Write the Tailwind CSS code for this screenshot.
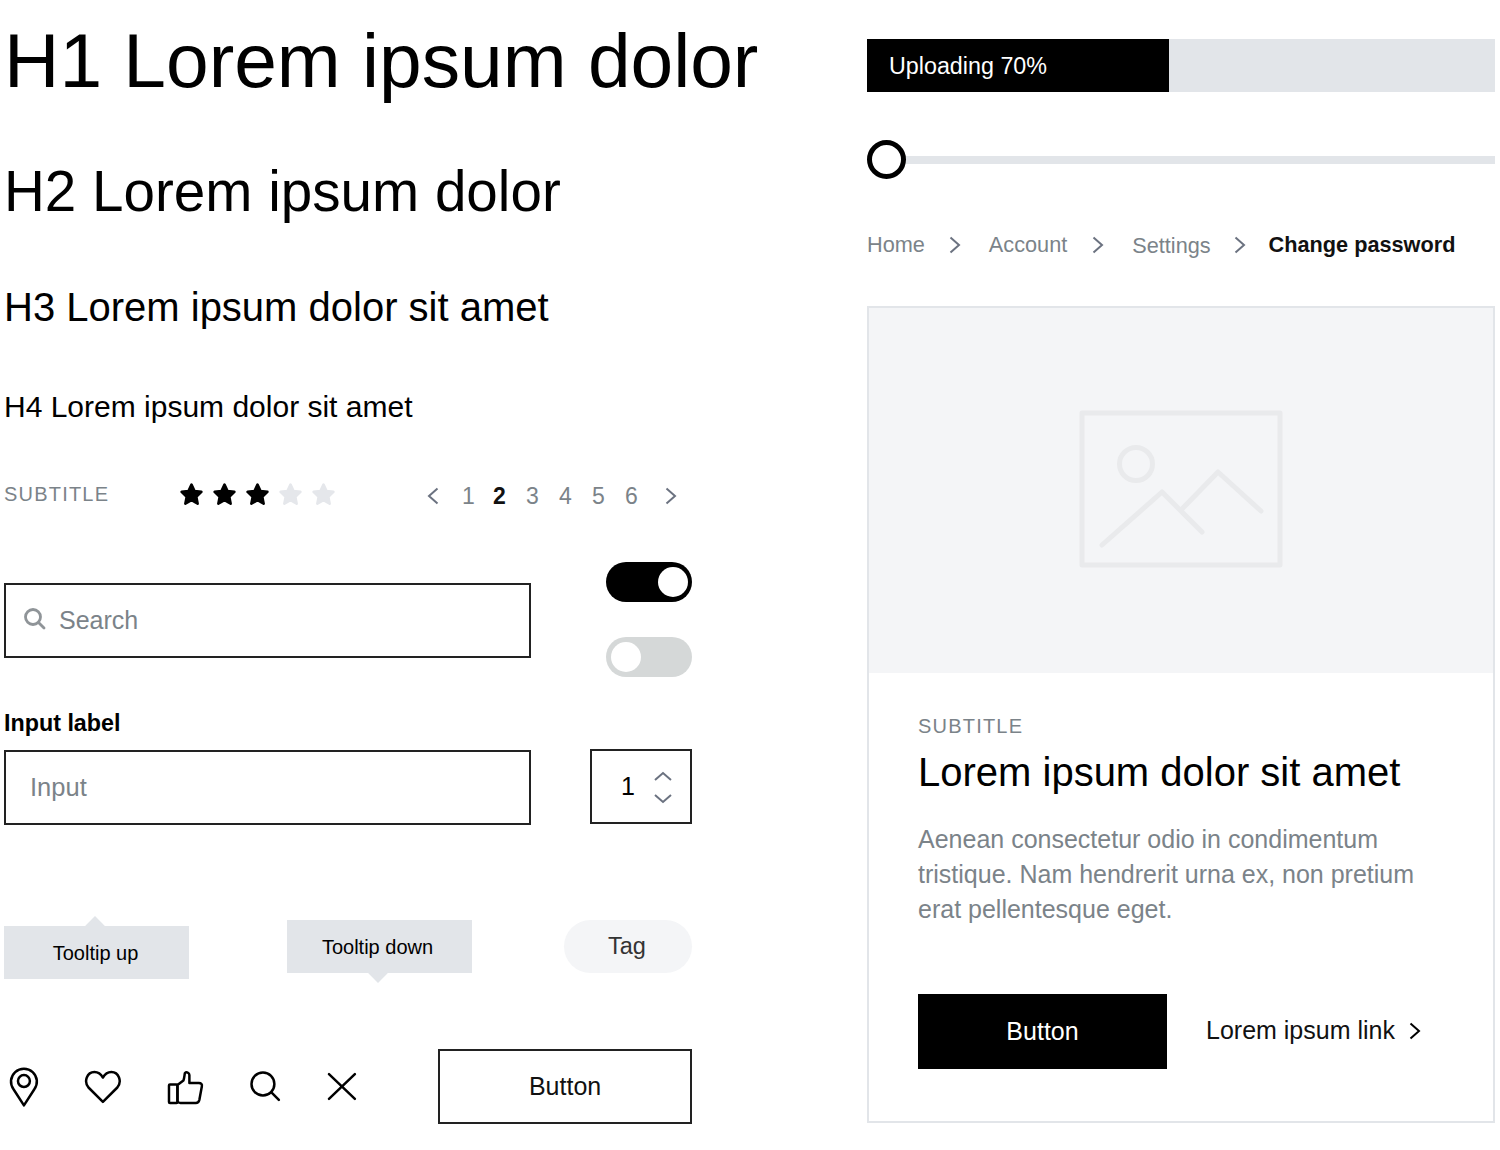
<!DOCTYPE html>
<html lang="en">
<head>
<meta charset="UTF-8">
<title>UI Kit</title>
<script src="https://cdn.jsdelivr.net/npm/@tailwindcss/browser@4"></script>
</head>
<body class="bg-white text-black font-['Liberation_Sans',Arial,sans-serif]">
<div class="w-[1500px] h-[1150px] flex overflow-hidden">

  <!-- Left column -->
  <div class="w-[688px] ml-1 shrink-0 flex flex-col">
    <h1 class="h-[122px] flex items-center text-[76.7px] leading-none whitespace-nowrap">H1 Lorem ipsum dolor</h1>
    <h2 class="h-[141px] flex items-center text-[56.6px] leading-none whitespace-nowrap">H2 Lorem ipsum dolor</h2>
    <h3 class="h-[88px] flex items-center text-[40px] leading-none whitespace-nowrap">H3 Lorem ipsum dolor sit amet</h3>
    <h4 class="h-[112px] flex items-center text-[30px] leading-none whitespace-nowrap">H4 Lorem ipsum dolor sit amet</h4>

    <!-- Subtitle, stars, pagination -->
    <div class="h-[62px] flex items-center">
      <span class="w-[175px] text-[20px] tracking-[1.2px] text-[#7b8389]">SUBTITLE</span>
      <div class="flex gap-[8px]">
        <svg width="25" height="25" viewBox="0 0 24 24" fill="#000" stroke="#000" stroke-width="2.500" stroke-linejoin="round"><path d="M12 2.500l2.900 6.200 6.600.8-4.900 4.600 1.300 6.700L12 17.500l-5.900 3.300 1.300-6.700-4.900-4.600 6.600-.8z"/></svg>
        <svg width="25" height="25" viewBox="0 0 24 24" fill="#000" stroke="#000" stroke-width="2.500" stroke-linejoin="round"><path d="M12 2.500l2.900 6.200 6.600.8-4.900 4.600 1.300 6.700L12 17.500l-5.900 3.300 1.300-6.700-4.900-4.600 6.600-.8z"/></svg>
        <svg width="25" height="25" viewBox="0 0 24 24" fill="#000" stroke="#000" stroke-width="2.500" stroke-linejoin="round"><path d="M12 2.500l2.900 6.200 6.600.8-4.900 4.600 1.300 6.700L12 17.500l-5.900 3.300 1.300-6.700-4.900-4.600 6.600-.8z"/></svg>
        <svg width="25" height="25" viewBox="0 0 24 24" fill="#e5e7eb" stroke="#e5e7eb" stroke-width="2.500" stroke-linejoin="round"><path d="M12 2.500l2.900 6.200 6.600.8-4.900 4.600 1.300 6.700L12 17.500l-5.900 3.300 1.300-6.700-4.900-4.600 6.600-.8z"/></svg>
        <svg width="25" height="25" viewBox="0 0 24 24" fill="#e5e7eb" stroke="#e5e7eb" stroke-width="2.500" stroke-linejoin="round"><path d="M12 2.500l2.900 6.200 6.600.8-4.900 4.600 1.300 6.700L12 17.500l-5.900 3.300 1.300-6.700-4.900-4.600 6.600-.8z"/></svg>
      </div>
      <div class="ml-[91px] flex items-center text-[23px] text-[#7b8389] pt-[4px]">
        <svg width="12" height="18" viewBox="0 0 12 18" fill="none" stroke="#6b7280" stroke-width="2"><path d="M10.500 1.500L2 9l8.500 7.500"/></svg>
        <span class="w-[33px] ml-[13px] text-center">1</span>
        <span class="w-[33px] -ml-[2px] text-center font-bold text-[#111]">2</span>
        <span class="w-[33px] text-center">3</span>
        <span class="w-[33px] text-center">4</span>
        <span class="w-[33px] text-center">5</span>
        <span class="w-[33px] text-center">6</span>
        <svg class="ml-[17px]" width="12" height="18" viewBox="0 0 12 18" fill="none" stroke="#6b7280" stroke-width="2"><path d="M1.500 1.500L10 9l-8.500 7.500"/></svg>
      </div>
    </div>

    <!-- Inputs and switches -->
    <div class="mt-[37px] flex justify-between">
      <div class="w-[527px] pt-[21px]">
        <div class="h-[75px] border-2 border-[#222] flex items-center pl-[17px] text-[25px] text-[#7b8389]">
          <svg class="-mt-[4px]" width="24" height="24" viewBox="0 0 24 24" fill="none" stroke="#8f9498" stroke-width="2.800" stroke-linecap="round"><circle cx="10" cy="10" r="7.500"/><path d="M15.500 15.500L21 21"/></svg>
          <span class="ml-[12px]">Search</span>
        </div>
        <div class="mt-[52px] text-[23.3px] font-bold leading-[26px]">Input label</div>
        <div class="mt-[14px] h-[75px] border-2 border-[#222] flex items-center pl-[24px] text-[25.5px] text-[#7b8389]">Input</div>
      </div>
      <div class="w-[102px] flex flex-col">
        <div class="w-[86px] h-[40px] ml-[16px] rounded-full bg-black flex items-center justify-end pr-[4px]">
          <span class="w-[30px] h-[30px] rounded-full bg-white"></span>
        </div>
        <div class="w-[86px] h-[40px] ml-[16px] mt-[35px] rounded-full bg-[#d5d8d8] flex items-center pl-[5px]">
          <span class="w-[30px] h-[30px] rounded-full bg-white"></span>
        </div>
        <div class="mt-[72px] h-[75px] border-2 border-[#222] flex items-center">
          <span class="ml-[29px] text-[25px] leading-none">1</span>
          <svg class="ml-[18px]" width="20" height="38" viewBox="0 0 20 38" fill="none" stroke="#6b7280" stroke-width="2"><path d="M2 12l8-7 8 7M2 27l8 7 8-7"/></svg>
        </div>
      </div>
    </div>

    <!-- Tooltips and tag -->
    <div class="mt-[95px] h-[53px] flex items-start text-[20px]">
      <div class="relative mt-[6px] w-[185px] h-[53px] pr-[2px] bg-[#e2e5e9] flex items-center justify-center">
        <span class="absolute -top-[7px] left-[84px] w-[14px] h-[14px] rotate-45 bg-[#e2e5e9] -z-10"></span>
        Tooltip up
      </div>
      <div class="relative ml-[98px] w-[185px] h-[53px] pr-[4px] bg-[#e2e5e9] flex items-center justify-center">
        <span class="absolute -bottom-[7px] left-[84px] w-[14px] h-[14px] rotate-45 bg-[#e2e5e9] -z-10"></span>
        Tooltip down
      </div>
      <div class="ml-[92px] w-[128px] h-[53px] pr-[2px] rounded-full bg-[#f4f5f7] flex items-center justify-center text-[23.5px] text-[#333]">Tag</div>
    </div>

    <!-- Icons and button -->
    <div class="mt-[76px] flex items-center">
      <svg class="ml-[5px]" width="30" height="42" viewBox="0 0 30 42" fill="none" stroke="#000" stroke-width="2.500" stroke-linejoin="round"><path d="M15 39.500L4.700 23.500A13 13 0 1 1 25.300 23.500Z"/><circle cx="15" cy="15" r="6"/></svg>
      <svg class="ml-[45px]" width="38" height="34" viewBox="0 0 38 34" fill="none" stroke="#000" stroke-width="2.500" stroke-linejoin="round"><path d="M19 32L4.500 17.500C-.5 11.500 3 2 10.500 2 14 2 17 4 19 7.500 21 4 24 2 27.500 2 35 2 38.500 11.500 33.500 17.500Z"/></svg>
      <svg class="ml-[45px]" width="38" height="36" viewBox="0 0 38 36" fill="none" stroke="#000" stroke-width="2.500" stroke-linejoin="round"><rect x="2" y="15.500" width="8.500" height="18.500" rx="1"/><path d="M10.500 16L16.500 11.500C17.500 9 17.500 6 18 4 19.500 2.500 22.500 3.500 22.500 6L22.500 14 32 14C34.500 14 35.500 15.500 35 17.500L32.500 31C32 33 31 34 29 34L13.500 34C12 34 10.500 33 10.500 32Z"/></svg>
      <svg class="ml-[46px]" width="32" height="32" viewBox="0 0 32 32" fill="none" stroke="#000" stroke-width="2.500" stroke-linecap="round"><circle cx="13" cy="13" r="11.500"/><path d="M21.500 21.500L29 29"/></svg>
      <svg class="ml-[45px]" width="30" height="30" viewBox="0 0 30 30" fill="none" stroke="#000" stroke-width="2.500" stroke-linecap="round"><path d="M2 2l26 25M28 2L2 27"/></svg>
      <div class="ml-[81px] w-[255px] h-[75px] border-2 border-[#222] flex items-center justify-center text-[25px] text-[#111]">Button</div>
    </div>
  </div>

  <!-- Right column -->
  <div class="ml-[175px] w-[628px] shrink-0 flex flex-col">
    <div class="mt-[39px] h-[53px] bg-[#e2e5e9]">
      <div class="w-[302px] h-full bg-black text-white text-[23.3px] flex items-center pl-[22px] pt-[2px]">Uploading 70%</div>
    </div>

    <div class="mt-[48px] h-[39px] flex items-center">
      <span class="w-[39px] h-[39px] rounded-full border-[5px] border-black bg-white shrink-0"></span>
      <span class="flex-1 h-[8px] bg-[#e2e5e9]"></span>
    </div>

    <div class="mt-[53px] h-[26px] flex items-center text-[21.7px] text-[#7b8389] whitespace-nowrap">
      <span>Home</span>
      <svg class="ml-[24px]" width="12" height="18" viewBox="0 0 12 18" fill="none" stroke="#6b7280" stroke-width="2"><path d="M1.500 1.500L10 9l-8.500 7.500"/></svg>
      <span class="ml-[28px]">Account</span>
      <svg class="ml-[25px]" width="12" height="18" viewBox="0 0 12 18" fill="none" stroke="#6b7280" stroke-width="2"><path d="M1.500 1.500L10 9l-8.500 7.500"/></svg>
      <span class="ml-[28px] mt-[2px]">Settings</span>
      <svg class="ml-[23px]" width="12" height="18" viewBox="0 0 12 18" fill="none" stroke="#6b7280" stroke-width="2"><path d="M1.500 1.500L10 9l-8.500 7.500"/></svg>
      <span class="ml-[23px] font-bold text-[#111]">Change password</span>
    </div>

    <!-- Card -->
    <div class="mt-[48px] h-[817px] border-2 border-[#e2e5e9] flex flex-col">
      <div class="h-[365px] bg-[#f4f5f7] flex items-center justify-center pb-[3px]">
        <svg width="204" height="158" viewBox="0 0 204 158" fill="none" stroke="#e9eaec" stroke-width="5" stroke-linecap="round" stroke-linejoin="round"><rect x="3" y="3" width="198" height="152"/><circle cx="57" cy="54" r="16.500"/><path d="M23 135L83 82 123 122M103 99L139 62 182 101"/></svg>
      </div>
      <div class="pl-[49px] pr-[60px] pt-[42px]">
        <div class="text-[20px] leading-[23px] tracking-[1.200px] text-[#7b8389]">SUBTITLE</div>
        <div class="mt-[11px] text-[40px] leading-[46px] whitespace-nowrap">Lorem ipsum dolor sit amet</div>
        <p class="mt-[27px] text-[25px] leading-[35px] text-[#7b8389]">Aenean consectetur odio in condimentum tristique. Nam hendrerit urna ex, non pretium erat pellentesque eget.</p>
        <div class="mt-[67px] flex items-center">
          <div class="w-[249px] h-[75px] bg-black text-white text-[25px] flex items-center justify-center">Button</div>
          <span class="ml-[39px] -mt-[2px] text-[25px] text-[#111]">Lorem ipsum link</span>
          <svg class="ml-[14px] -mt-[2px]" width="12" height="18" viewBox="0 0 12 18" fill="none" stroke="#000" stroke-width="2"><path d="M1.500 1.500L10 9l-8.500 7.500"/></svg>
        </div>
      </div>
    </div>
  </div>
</div>
</body>
</html>
